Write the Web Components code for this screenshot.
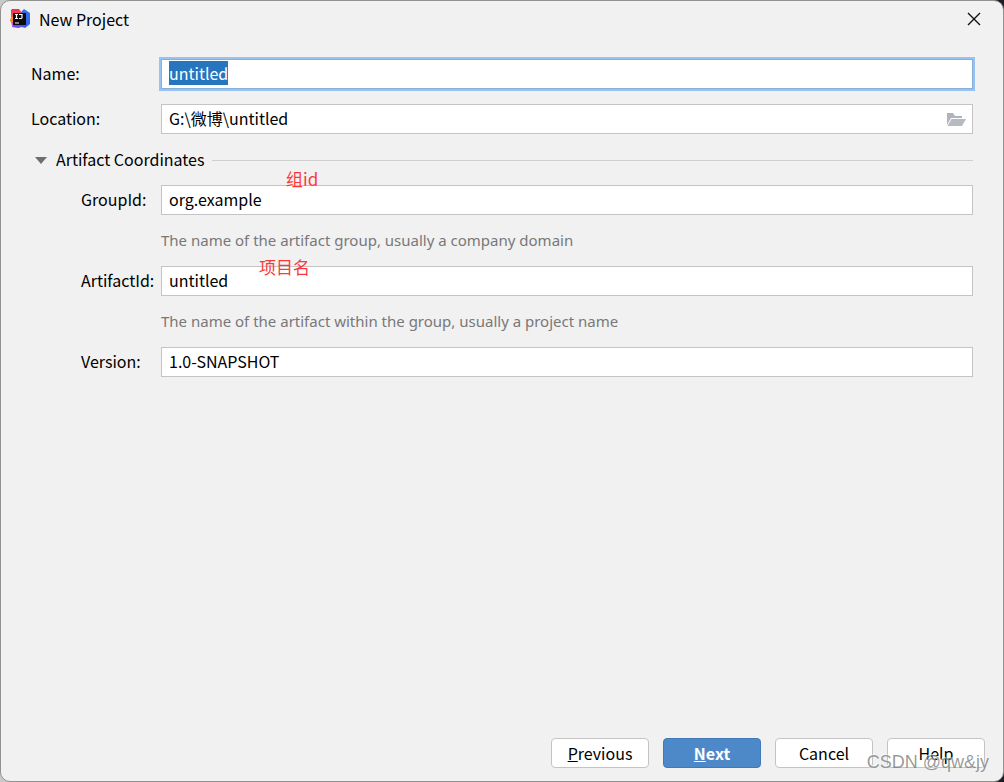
<!DOCTYPE html>
<html lang="en">
<head>
<meta charset="utf-8">
<title>New Project</title>
<style>
  html { height: 100%; background: linear-gradient(90deg, #c9c9c9 91%, #1c1c22 91%); }
  body {
    margin: 0; min-height: 100%; display: flex; box-sizing: border-box;
    font: 16px/22px "Noto Sans CJK SC", sans-serif; color: #000;
  }
</style>
</head>
<body>
<dialog-window heading="New Project">
  <form-field label="Name:" value="untitled" selected></form-field>
  <form-field label="Location:" value="G:\微博\untitled" browse></form-field>
  <field-section heading="Artifact Coordinates">
    <form-field label="GroupId:" value="org.example" hint="The name of the artifact group, usually a company domain">
      <red-note style="--x: 125px; --y: -17px">组id</red-note>
    </form-field>
    <form-field label="ArtifactId:" value="untitled" hint="The name of the artifact within the group, usually a project name">
      <red-note style="--x: 98px; --y: -10px">项目名</red-note>
    </form-field>
    <form-field label="Version:" value="1.0-SNAPSHOT"></form-field>
  </field-section>
  <push-button slot="actions"><u>P</u>revious</push-button>
  <push-button slot="actions" primary><u>N</u>ext</push-button>
  <push-button slot="actions">Cancel</push-button>
  <push-button slot="actions">Help</push-button>
  <page-watermark slot="overlay">CSDN @qw&amp;jy</page-watermark>
</dialog-window>

<template id="dialog-window">
  <style>
    :host {
      flex: 1; display: flex; flex-direction: column; position: relative; box-sizing: border-box;
      background: #f1f1f1; border: 1px solid #929292; border-radius: 10px;
    }
    header { display: flex; align-items: center; height: 36px; padding: 0 21px 0 8px; }
    h1 { flex: 1; margin: 0 0 0 8px; font: inherit; }
    svg { display: block; }
    .close { padding: 0; border: 0; background: none; }
    main { flex: 1; display: flex; flex-direction: column; gap: 15px; padding: 22px 30px; }
    footer { display: flex; justify-content: flex-end; gap: 14px; padding: 0 18px 13px; }
  </style>
  <header>
    <svg width="22" height="22" viewBox="0 0 22 22" aria-hidden="true">
      <defs>
        <linearGradient id="b" x1="0" y1="1" x2="1" y2="0"><stop offset="0" stop-color="#8a45f5"/><stop offset=".5" stop-color="#2b62e8"/><stop offset="1" stop-color="#3b76ee"/></linearGradient>
        <linearGradient id="r" x1="0" y1="0" x2="0" y2="1"><stop offset="0" stop-color="#f3295f"/><stop offset="1" stop-color="#ff6b35"/></linearGradient>
      </defs>
      <path d="M2 2l1-1h7l3 4-2 6-7 1-2-3z" fill="url(#r)"/>
      <path d="M1 11l4-3v7H4l-3-2z" fill="#fb8a27"/>
      <path d="M12 4l3-3 6 4v11l-5 4-3-1-4 1-6-1 1-5 9-3z" fill="url(#b)"/>
      <path d="M2 13l3 2-2 3z" fill="#d94ad1"/>
      <path d="M4 5h13v12H4z" fill="#0b0b10"/>
      <path d="M6 6.500h3M7.500 6.500v4M6 10.500h3M10 6.500h3v3q0 1-1 1h-2M6 15h4" fill="none" stroke="#fff" stroke-width="1.2"/>
    </svg>
    <h1></h1>
    <button class="close" type="button" aria-label="Close">
      <svg width="16" height="16" viewBox="0 0 16 16"><path d="M2 2l12 12M14 2L2 14" fill="none" stroke="#111" stroke-width="1.4"/></svg>
    </button>
  </header>
  <main><slot></slot></main>
  <footer><slot name="actions"></slot></footer>
  <slot name="overlay"></slot>
</template>

<template id="form-field">
  <style>
    :host { display: grid; grid-template-columns: var(--label-width, 130px) 1fr; align-items: center; position: relative; }
    label { padding-bottom: 2px; }
    .box { position: relative; display: flex; }
    input {
      flex: 1; min-width: 0; height: 30px; box-sizing: border-box; padding: 0 7px 2px; margin: 0;
      border: 1px solid #c4c4c4; border-radius: 0; background: #fff;
      font: inherit; line-height: 22px; color: #000; outline: none;
    }
    :host([selected]) input { border-color: #87afda; box-shadow: 0 0 0 2px #97c3f3; }
    input::selection { background: #2675bf; color: #fff; }
    .browse { position: absolute; right: 7px; top: 7px; padding: 0; border: 0; background: none; }
    svg { display: block; }
    p { grid-column: 2; margin: 14px 0 0; padding-bottom: 1px; font: 15px/22px "Noto Sans", sans-serif; color: #787878; }
    :host([hint]) { margin-bottom: -1px; }
    [hidden] { display: none; }
  </style>
  <label for="field"></label>
  <div class="box">
    <input id="field" type="text" spellcheck="false">
    <button class="browse" type="button" aria-label="Browse" hidden>
      <svg width="20" height="17" viewBox="0 0 20 17"><path d="M1 14V2h6l2 3h7v2H5z" fill="#afb5bb"/><path d="M5.500 8H20l-4 7H1.500z" fill="#b5bbc0"/></svg>
    </button>
    <slot></slot>
  </div>
  <p hidden></p>
</template>

<template id="field-section">
  <style>
    :host { display: block; }
    h2 { display: flex; align-items: center; gap: 8px; margin: 0 0 14px; font: inherit; }
    h2::after { content: ""; flex: 1; height: 1px; background: #cfcfcf; }
    svg { margin: 0 1px 0 4px; }
    span { margin: -1px 0 1px; }
    .fields { display: flex; flex-direction: column; gap: 15px; padding-left: 50px; --label-width: 80px; }
  </style>
  <h2><svg width="12" height="8" viewBox="0 0 12 8" aria-hidden="true"><path d="M0 1h12L6 8z" fill="#6e6e6e"/></svg><span></span></h2>
  <div class="fields"><slot></slot></div>
</template>

<template id="push-button">
  <style>
    :host { display: block; }
    button {
      width: 98px; height: 30px; padding: 0; border: 1px solid #c4c4c4; border-radius: 4px;
      background: #fff; font: inherit; color: #000; display: block;
    }
    :host([primary]) button { background: #4d89c9; border-color: #3f79b8; color: #fff; font-weight: 700; }
  </style>
  <button type="button"><slot></slot></button>
</template>

<template id="red-note">
  <style>
    :host {
      position: absolute; left: var(--x); top: var(--y); white-space: nowrap; pointer-events: none;
      font: 17px/22px "Noto Sans CJK SC", sans-serif; color: #fa3a3a;
    }
  </style>
  <slot></slot>
</template>

<template id="page-watermark">
  <style>
    :host {
      position: absolute; right: 14px; bottom: 8px; white-space: nowrap; pointer-events: none;
      font: 18px/22px "Liberation Sans", sans-serif; color: rgba(120, 120, 120, .75); text-shadow: -1px -1px 0 rgba(255, 255, 255, .6);
    }
  </style>
  <slot></slot>
</template>

<script>
  class TemplateElement extends HTMLElement {
    constructor() {
      super();
      this.attachShadow({ mode: "open" })
        .append(document.getElementById(this.localName).content.cloneNode(true));
    }
    find(selector) { return this.shadowRoot.querySelector(selector); }
  }
  class DialogWindow extends TemplateElement {
    connectedCallback() { this.find("h1").textContent = this.getAttribute("heading"); }
  }
  class FieldSection extends TemplateElement {
    connectedCallback() { this.find("span").textContent = this.getAttribute("heading"); }
  }
  class FormField extends TemplateElement {
    connectedCallback() {
      const input = this.find("input");
      this.find("label").textContent = this.getAttribute("label");
      input.value = this.getAttribute("value");
      this.find(".browse").hidden = !this.hasAttribute("browse");
      const hint = this.getAttribute("hint");
      this.find("p").hidden = !hint;
      this.find("p").textContent = hint;
      if (this.hasAttribute("selected")) { input.focus(); input.select(); }
    }
  }
  customElements.define("dialog-window", DialogWindow);
  customElements.define("field-section", FieldSection);
  customElements.define("form-field", FormField);
  customElements.define("push-button", class extends TemplateElement {});
  customElements.define("red-note", class extends TemplateElement {});
  customElements.define("page-watermark", class extends TemplateElement {});
</script>
</body>
</html>
